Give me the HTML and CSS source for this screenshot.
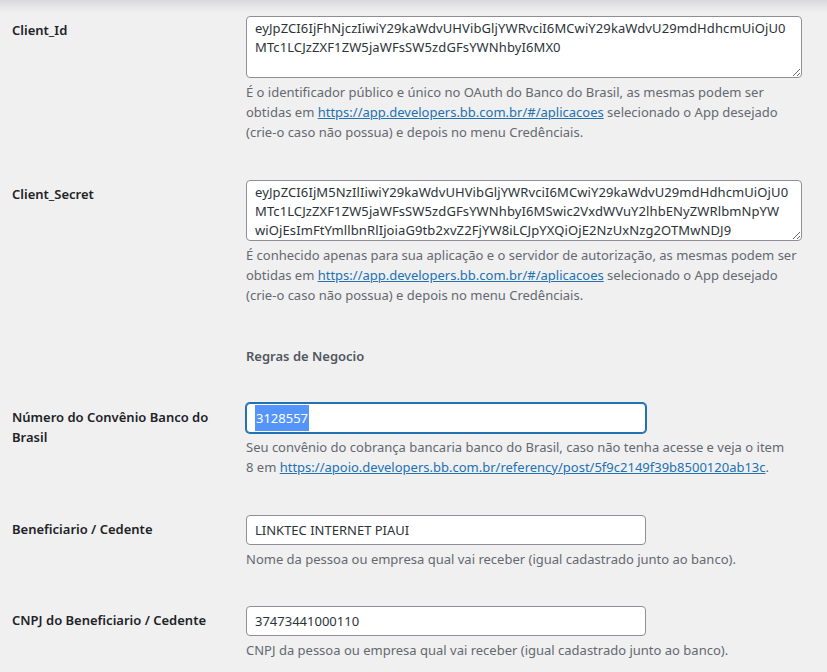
FILE: index.html
```html
<!DOCTYPE html>
<html lang="pt-BR">
<head>
<meta charset="utf-8">
<title>Configurações</title>
<link rel="stylesheet" href="styles.css">
</head>
<body>
<div class="wrap">
  <table class="form-table">
    <tbody>
      <tr class="row row--first">
        <th scope="row"><label for="client_id">Client_Id</label></th>
        <td>
          <textarea id="client_id" class="code-area" rows="3">eyJpZCI6IjFhNjczIiwiY29kaWdvUHVibGljYWRvciI6MCwiY29kaWdvU29mdHdhcmUiOjU0
MTc1LCJzZXF1ZW5jaWFsSW5zdGFsYWNhbyI6MX0</textarea>
          <p class="description">É o identificador público e único no OAuth do Banco do Brasil, as mesmas podem ser obtidas em <a href="#">https://app.developers.bb.com.br/#/aplicacoes</a> selecionado o App desejado (crie-o caso não possua) e depois no menu Credênciais.</p>
        </td>
      </tr>
      <tr class="row">
        <th scope="row"><label for="client_secret">Client_Secret</label></th>
        <td>
          <textarea id="client_secret" class="code-area code-area--full" rows="3">eyJpZCI6IjM5NzIlIiwiY29kaWdvUHVibGljYWRvciI6MCwiY29kaWdvU29mdHdhcmUiOjU0
MTc1LCJzZXF1ZW5jaWFsSW5zdGFsYWNhbyI6MSwic2VxdWVuY2lhbENyZWRlbmNpYW
wiOjEsImFtYmllbnRlIjoiaG9tb2xvZ2FjYW8iLCJpYXQiOjE2NzUxNzg2OTMwNDJ9</textarea>
          <p class="description">É conhecido apenas para sua aplicação e o servidor de autorização, as mesmas podem ser obtidas em <a href="#">https://app.developers.bb.com.br/#/aplicacoes</a> selecionado o App desejado (crie-o caso não possua) e depois no menu Credênciais.</p>
        </td>
      </tr>
      <tr class="row row--section">
        <th scope="row"></th>
        <td><h3 class="section-title">Regras de Negocio</h3></td>
      </tr>
      <tr class="row row--tall">
        <th scope="row"><label for="convenio">Número do Convênio Banco do Brasil</label></th>
        <td>
          <div id="convenio" class="text-input is-focused" role="textbox" tabindex="0"><span class="selected">3128557</span></div>
          <p class="description">Seu convênio do cobrança bancaria banco do Brasil, caso não tenha acesse e veja o item 8&nbsp;em <a href="#">https://apoio.developers.bb.com.br/referency/post/5f9c2149f39b8500120ab13c</a>.</p>
        </td>
      </tr>
      <tr class="row">
        <th scope="row"><label for="beneficiario">Beneficiario / Cedente</label></th>
        <td>
          <input id="beneficiario" class="text-input" type="text" value="LINKTEC INTERNET PIAUI">
          <p class="description">Nome da pessoa ou empresa qual vai receber (igual cadastrado junto ao banco).</p>
        </td>
      </tr>
      <tr class="row">
        <th scope="row"><label for="cnpj">CNPJ do Beneficiario / Cedente</label></th>
        <td>
          <input id="cnpj" class="text-input" type="text" value="37473441000110">
          <p class="description">CNPJ da pessoa ou empresa qual vai receber (igual cadastrado junto ao banco).</p>
        </td>
      </tr>
    </tbody>
  </table>
</div>
</body>
</html>
```
FILE: styles.css
```css
html, body {
  margin: 0;
  padding: 0;
}
body {
  background: linear-gradient(to bottom, #d9d9db 0, #ececed 10px, #f0f0f1 14px) top left / 100% 14px no-repeat, #f0f0f1;
  font-family: "Noto Sans", "Segoe UI", sans-serif;
  font-size: 13px;
  color: #1d2327;
  min-height: 672px;
}
.wrap {
  padding-left: 12px;
}
.form-table {
  border-collapse: collapse;
  border-spacing: 0;
}
.form-table th {
  width: 210px;
  padding: 20px 24px 21px 0;
  text-align: left;
  vertical-align: top;
  font-weight: 600;
  font-size: 13px;
  line-height: 20px;
  color: #1d2327;
}
.form-table td {
  padding: 16px 0 21px 0;
  vertical-align: top;
  line-height: 20px;
}
.row--first th { padding-top: 20px; }
.row--first td { padding-top: 16px; padding-bottom: 22px; }
.row--section td { padding-top: 20px; padding-bottom: 21px; }
.row--section th { padding: 0; }
.row--tall td { padding-bottom: 22px; }

.code-area {
  display: block;
  box-sizing: border-box;
  width: 556px;
  height: 62px;
  margin: 0;
  padding: 2px 8px;
  border: 1px solid #8c8f94;
  border-radius: 4px;
  background: #fff;
  color: #2c3338;
  font-family: inherit;
  font-size: 13px;
  letter-spacing: 0.1px;
  line-height: 19px;
  white-space: pre;
  overflow: hidden;
  resize: vertical;
}
.code-area--full {
  height: 61px;
}
.description {
  margin: 4px 0 0;
  width: 556px;
  color: #646970;
  font-size: 13px;
  line-height: 20px;
}
.description a {
  color: #2271b1;
  text-decoration: underline;
}
.section-title {
  margin: 0;
  font-size: 13px;
  font-weight: 600;
  line-height: 20px;
  color: #50575e;
}
.text-input {
  display: flex;
  align-items: center;
  box-sizing: border-box;
  width: 400px;
  height: 30px;
  margin: 0;
  padding: 0 8px;
  border: 1px solid #8c8f94;
  border-radius: 4px;
  background: #fff;
  color: #2c3338;
  font-family: inherit;
  font-size: 13px;
}
.text-input.is-focused {
  border-color: #2271b1;
  box-shadow: 0 0 0 1px #2271b1;
  outline: none;
}
.selected {
  display: flex;
  align-items: center;
  height: 26px;
  padding: 0 1px;
  background: #5595fa;
  color: #fff;
}
```
